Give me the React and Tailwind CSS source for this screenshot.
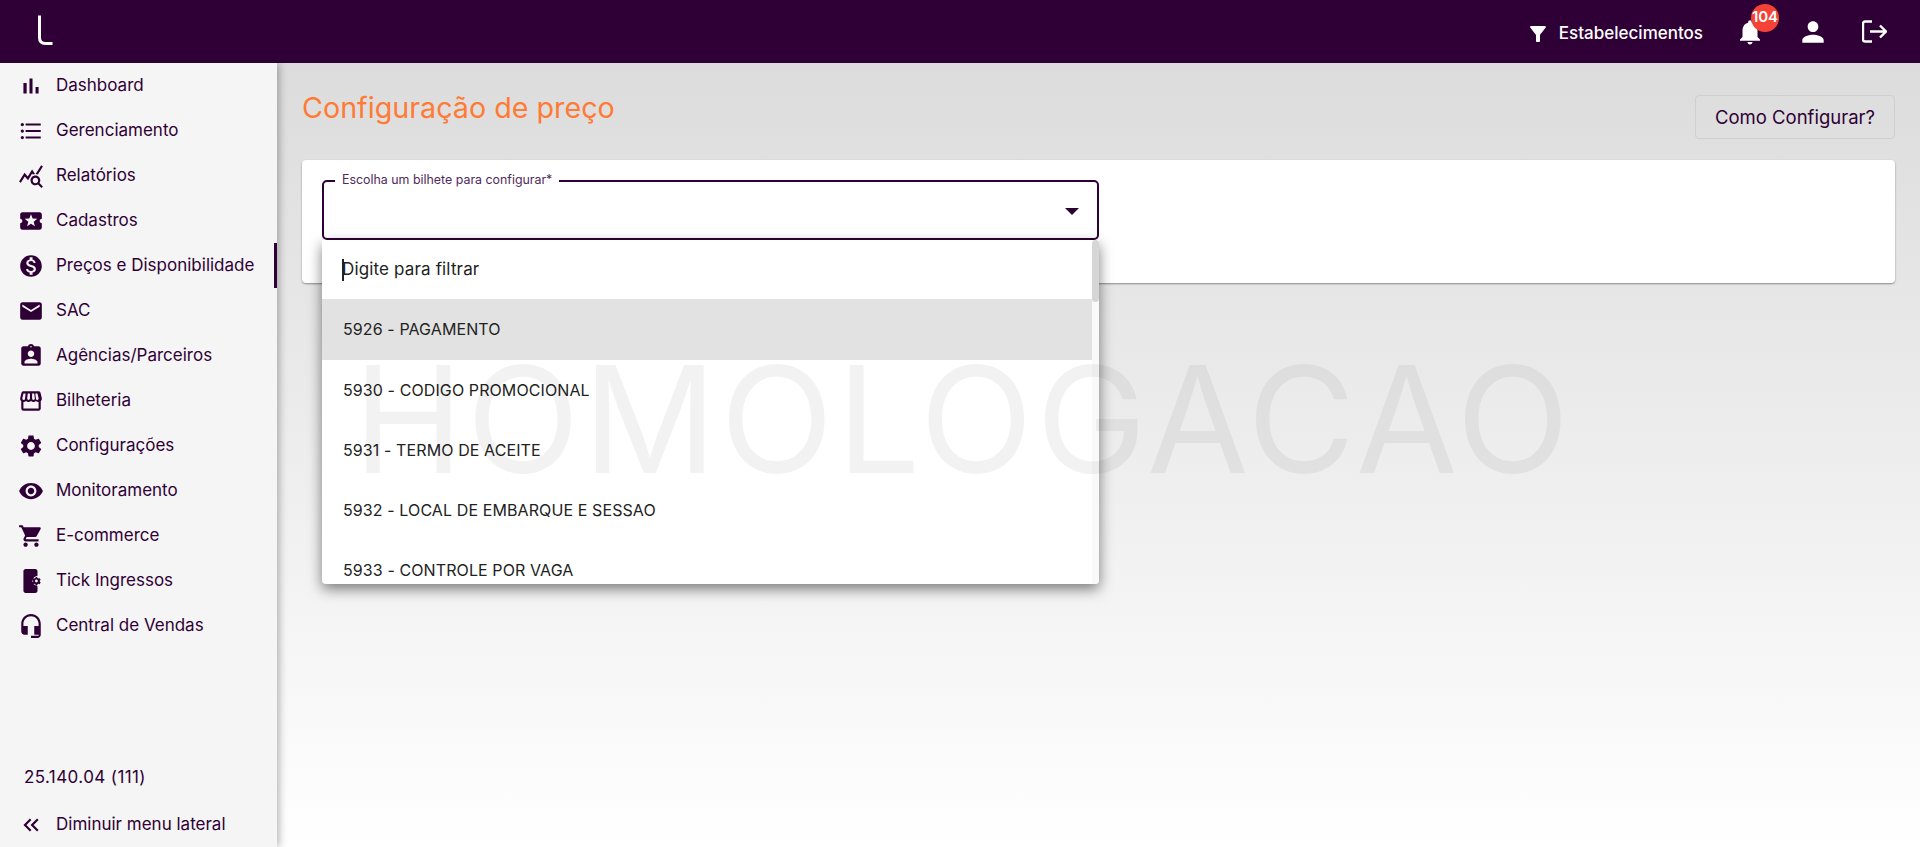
const FONT = "font-['Inter','Noto_Sans',sans-serif]";

const paths = {
  bar: "M5 9.2h3V19H5V9.2zM10.6 5h2.8v14h-2.8V5zm5.6 8H19v6h-2.8v-6z",
  list: "M4 10.5c-.83 0-1.5.67-1.5 1.5s.67 1.5 1.5 1.5 1.5-.67 1.5-1.5-.67-1.5-1.5-1.5zm0-6c-.83 0-1.5.67-1.5 1.5S3.17 7.5 4 7.5 5.5 6.83 5.5 6 4.83 4.5 4 4.5zm0 12c-.83 0-1.5.68-1.5 1.5s.68 1.5 1.5 1.5 1.5-.68 1.5-1.5-.67-1.5-1.5-1.5zM7 19h14v-2H7v2zm0-6h14v-2H7v2zm0-8v2h14V5H7z",
  query: "M19.88 18.47c.44-.7.7-1.51.7-2.39 0-2.49-2.01-4.5-4.5-4.5s-4.5 2.01-4.5 4.5 2.01 4.5 4.49 4.5c.88 0 1.7-.26 2.39-.7L21.58 23 23 21.58l-3.12-3.11zm-3.8.11c-1.38 0-2.5-1.12-2.5-2.5s1.12-2.5 2.5-2.5 2.5 1.12 2.5 2.5-1.12 2.5-2.5 2.5zm-.36-8.5c-.74.02-1.45.18-2.1.45l-.55-.83-3.8 6.18-3.01-3.52-3.63 5.81L1 17l5-8 3 3.5L13 6l2.72 4.08zm2.59.5c-.64-.28-1.33-.45-2.05-.49L21.38 2 23 3.18l-4.69 7.4z",
  ticket: "M20 12c0-1.1.9-2 2-2V6c0-1.1-.9-2-2-2H4c-1.1 0-1.99.9-1.99 2v4c1.1 0 1.99.9 1.99 2s-.89 2-2 2v4c0 1.1.9 2 2 2h16c1.1 0 2-.9 2-2v-4c-1.1 0-2-.9-2-2zm-4.42 4.8L12 14.5l-3.58 2.3 1.08-4.12-3.29-2.69 4.24-.25L12 5.8l1.54 3.95 4.24.25-3.29 2.69 1.09 4.11z",
  dollar: "M12 2C6.48 2 2 6.48 2 12s4.48 10 10 10 10-4.48 10-10S17.52 2 12 2zm1.41 16.09V20h-2.67v-1.93c-1.71-.36-3.16-1.46-3.27-3.4h1.96c.1 1.05.82 1.87 2.65 1.87 1.96 0 2.4-.98 2.4-1.59 0-.83-.44-1.61-2.67-2.14-2.48-.6-4.18-1.62-4.18-3.67 0-1.72 1.39-2.84 3.11-3.21V4h2.67v1.95c1.86.45 2.79 1.86 2.85 3.39H14.3c-.05-1.11-.64-1.87-2.22-1.87-1.5 0-2.4.68-2.4 1.64 0 .84.65 1.39 2.67 1.91s4.18 1.39 4.18 3.91c-.01 1.83-1.38 2.83-3.12 3.16z",
  mail: "M20 4H4c-1.1 0-1.99.9-1.99 2L2 18c0 1.1.9 2 2 2h16c1.1 0 2-.9 2-2V6c0-1.1-.9-2-2-2zm0 4l-8 5-8-5V6l8 5 8-5v2z",
  badge: "M19 3h-4.18C14.4 1.84 13.3 1 12 1s-2.4.84-2.82 2H5c-1.1 0-2 .9-2 2v14c0 1.1.9 2 2 2h14c1.1 0 2-.9 2-2V5c0-1.1-.9-2-2-2zm-7-.25c.41 0 .75.34.75.75s-.34.75-.75.75-.75-.34-.75-.75.34-.75.75-.75zM12 7c1.66 0 3 1.34 3 3s-1.34 3-3 3-3-1.34-3-3 1.34-3 3-3zm6 12H6v-1.4c0-2 4-3.1 6-3.1s6 1.1 6 3.1V19z",
  store: "M21.9 8.89l-1.05-4.37c-.22-.9-1-1.52-1.91-1.52H5.05c-.9 0-1.69.63-1.9 1.52L2.1 8.89c-.24 1.02-.02 2.06.62 2.88.08.11.19.19.28.29V19c0 1.1.9 2 2 2h14c1.1 0 2-.9 2-2v-6.94c.09-.09.2-.18.28-.28.64-.82.87-1.87.62-2.89zM7.02 5l-.58 4.86c-.08.65-.6 1.14-1.21 1.14-.49 0-.8-.29-.93-.47-.27-.34-.36-.78-.26-1.2L5.05 5h1.97zm10.92 0l1.05 4.33c.1.43.01.86-.26 1.2-.14.18-.44.47-.94.47-.61 0-1.14-.49-1.21-1.14L15.98 5h1.96zM15.51 9.52c.05.39-.07.78-.33 1.07-.22.26-.54.41-.95.41-.67 0-1.22-.59-1.22-1.31V5h1.96l.54 4.52zM11 9.69c0 .72-.55 1.31-1.29 1.31-.34 0-.65-.15-.89-.41-.25-.29-.37-.68-.33-1.07L9.04 5H11v4.69zM5 19v-6.03c.08.01.15.03.23.03.87 0 1.66-.36 2.24-.95.6.6 1.4.95 2.31.95.87 0 1.65-.36 2.23-.93.59.57 1.39.93 2.29.93.84 0 1.64-.35 2.24-.95.58.59 1.37.95 2.24.95.08 0 .15-.02.23-.03V19H5z",
  gear: "M19.14 12.94c.04-.3.06-.61.06-.94 0-.32-.02-.64-.07-.94l2.03-1.58c.18-.14.23-.41.12-.61l-1.92-3.32c-.12-.22-.37-.29-.59-.22l-2.39.96c-.5-.38-1.03-.7-1.62-.94l-.36-2.54c-.04-.24-.24-.41-.48-.41h-3.84c-.24 0-.43.17-.47.41l-.36 2.54c-.59.24-1.13.57-1.62.94l-2.39-.96c-.22-.08-.47 0-.59.22L2.74 8.87c-.12.21-.08.47.12.61l2.03 1.58c-.05.3-.09.63-.09.94s.02.64.07.94l-2.03 1.58c-.18.14-.23.41-.12.61l1.92 3.32c.12.22.37.29.59.22l2.39-.96c.5.38 1.03.7 1.62.94l.36 2.54c.05.24.24.41.48.41h3.84c.24 0 .44-.17.47-.41l.36-2.54c.59-.24 1.13-.56 1.62-.94l2.39.96c.22.08.47 0 .59-.22l1.92-3.32c.12-.22.07-.47-.12-.61l-2.01-1.58zM12 15.6c-1.98 0-3.6-1.62-3.6-3.6s1.62-3.6 3.6-3.6 3.6 1.62 3.6 3.6-1.62 3.6-3.6 3.6z",
  eye: "M12 4.5C7 4.5 2.73 7.61 1 12c1.73 4.39 6 7.5 11 7.5s9.27-3.11 11-7.5c-1.73-4.39-6-7.5-11-7.5zM12 17c-2.76 0-5-2.24-5-5s2.24-5 5-5 5 2.24 5 5-2.24 5-5 5zm0-8c-1.66 0-3 1.34-3 3s1.34 3 3 3 3-1.34 3-3-1.34-3-3-3z",
  cart: "M7 18c-1.1 0-1.99.9-1.99 2S5.9 22 7 22s2-.9 2-2-.9-2-2-2zM1 2v2h2l3.6 7.59-1.35 2.45c-.16.28-.25.61-.25.96 0 1.1.9 2 2 2h12v-2H7.42c-.14 0-.25-.11-.25-.25l.03-.12.9-1.63h7.45c.75 0 1.41-.41 1.75-1.03l3.58-6.49c.08-.14.12-.31.12-.48 0-.55-.45-1-1-1H5.21l-.94-2H1zm16 16c-1.1 0-1.99.9-1.99 2s.89 2 1.99 2 2-.9 2-2-.9-2-2-2z",
  phone: "M7 1h9c1.1 0 2 .9 2 2v4.2c-2.6.4-4.6 2.5-4.8 4.8.2 2.3 2.2 4.4 4.8 4.8V21c0 1.1-.9 2-2 2H7c-1.1 0-2-.9-2-2V3c0-1.1.9-2 2-2zm10.6 7.2l.5 1.1c.3.1.5.2.7.4l1.2-.3.9 1.5-.8.9c0 .2 0 .5 0 .7l.8.9-.9 1.5-1.2-.3c-.2.2-.4.3-.7.4l-.5 1.1h-1.2l-.4-1.1c-.3-.1-.5-.2-.7-.4l-1.2.3-.9-1.5.8-.9c0-.2 0-.5 0-.7l-.8-.9.9-1.5 1.2.3c.2-.2.4-.3.7-.4l.4-1.1h1.2zm-.6 2.5c-.7 0-1.3.6-1.3 1.3s.6 1.3 1.3 1.3 1.3-.6 1.3-1.3-.6-1.3-1.3-1.3z",
  headset: "M12 1c-4.97 0-9 4.03-9 9v7c0 1.66 1.34 3 3 3h3v-8H5v-2c0-3.87 3.13-7 7-7s7 3.13 7 7v2h-4v8h4v1h-7v2h6c1.66 0 3-1.34 3-3V10c0-4.97-4.03-9-9-9z",
  collapse: "M17.59 18 19 16.59 14.42 12 19 7.41 17.59 6l-6 6zM11 18l1.41-1.41L7.83 12l4.58-4.59L11 6l-6 6z",
};

const menu = [
  ["bar", "Dashboard"],
  ["list", "Gerenciamento"],
  ["query", "Relatórios"],
  ["ticket", "Cadastros"],
  ["dollar", "Preços e Disponibilidade"],
  ["mail", "SAC"],
  ["badge", "Agências/Parceiros"],
  ["store", "Bilheteria"],
  ["gear", "Configurações"],
  ["eye", "Monitoramento"],
  ["cart", "E-commerce"],
  ["phone", "Tick Ingressos"],
  ["headset", "Central de Vendas"],
];

const options = [
  "5930 - CODIGO PROMOCIONAL",
  "5931 - TERMO DE ACEITE",
  "5932 - LOCAL DE EMBARQUE E SESSAO",
  "5933 - CONTROLE POR VAGA",
];

function MenuIcon({ name }) {
  return (
    <svg viewBox="0 0 24 24" className="w-[26px] h-[26px] fill-[#2f0035] shrink-0">
      <path d={paths[name]} />
    </svg>
  );
}

function Sidebar() {
  return (
    <aside className="w-[277px] shrink-0 bg-[#f5f5f5] shadow-[2px_0_8px_rgba(0,0,0,0.3)] flex flex-col relative z-10 text-[#2f0035]">
      <nav className="flex flex-col">
        {menu.map(([icon, label], i) => (
          <div key={label} className={`h-[45px] flex items-center pl-[18px] gap-[12px] text-[17px] ${i === 4 ? "border-r-[3px] border-[#2f0035]" : ""}`}>
            <MenuIcon name={icon} />
            <span>{label}</span>
          </div>
        ))}
      </nav>
      <div className="mt-auto">
        <div className="pl-[24px] text-[17px] tracking-[0.4px] h-[24px] flex items-center mb-[12px]">25.140.04 (111)</div>
        <div className="h-[45px] flex items-center pl-[18px] gap-[12px] text-[17px]">
          <MenuIcon name="collapse" />
          <span>Diminuir menu lateral</span>
        </div>
      </div>
    </aside>
  );
}

function Header() {
  return (
    <header className="h-[63px] shrink-0 bg-[#2f0035] flex items-center justify-between text-white relative z-20 pr-[33px]">
      <svg viewBox="0 0 20 34" className="w-5 h-[34px] ml-[34px]" fill="none" stroke="white" strokeWidth="3">
        <path d="M5.5 0.5v22c0 4 2 6 6 6h7" />
      </svg>
      <div className="flex items-center">
        <div className="flex items-center mt-[5px] mr-[32px]">
          <svg viewBox="0 0 24 24" className="w-6 h-6 fill-white mr-[9px]">
            <path d="M4.25 5.61C6.27 8.2 10 13 10 13v6c0 .55.45 1 1 1h2c.55 0 1-.45 1-1v-6s3.72-4.8 5.74-7.39c.51-.66.04-1.61-.79-1.61H5.04c-.83 0-1.3.95-.79 1.61z" />
          </svg>
          <span className="text-[17px] font-medium">Estabelecimentos</span>
        </div>
        <div className="relative mr-[32px]">
          <svg viewBox="0 0 24 24" className="w-[30px] h-[30px] fill-white block">
            <path d="M12 22c1.1 0 2-.9 2-2h-4c0 1.1.9 2 2 2zm6-6v-5c0-3.07-1.63-5.64-4.5-6.32V4c0-.83-.67-1.5-1.5-1.5s-1.5.67-1.5 1.5v.68C7.64 5.36 6 7.92 6 11v5l-2 2v1h16v-1l-2-2z" />
          </svg>
          <span className="absolute -top-[13px] left-[16px] w-[28px] h-[28px] rounded-full bg-[#f44336] text-[15px] font-semibold flex items-center justify-center">104</span>
        </div>
        <svg viewBox="0 0 24 24" className="w-8 h-8 fill-white mr-[33px]">
          <path d="M12 12c2.21 0 4-1.79 4-4s-1.79-4-4-4-4 1.79-4 4 1.79 4 4 4zm0 2c-2.67 0-8 1.34-8 4v2h16v-2c0-2.66-5.33-4-8-4z" />
        </svg>
        <svg viewBox="0 0 25 23" className="w-[25px] h-[23px]" fill="none" stroke="white" strokeWidth="2.4">
          <path d="M10 1.5H3a2 2 0 0 0-2 2v16a2 2 0 0 0 2 2h7M8 11.5h16M18 5.5l6 6-6 6" />
        </svg>
      </div>
    </header>
  );
}

function TicketSelect() {
  return (
    <div className="relative w-[777px]">
      <div className="h-[60px] border-2 border-[#2f0035] rounded-[5px] flex items-center justify-end pr-[18px] pt-[2px]">
        <span className="w-0 h-0 border-x-[7px] border-x-transparent border-t-[7px] border-t-[#2f0035]" />
      </div>
      <span className="absolute -top-[8px] left-[13px] bg-white px-[7px] text-[12.4px] leading-[16px] text-[#4f2a5c]">Escolha um bilhete para configurar*</span>
      <div className="absolute top-[60px] left-0 w-full h-[344px] bg-white rounded-b-[4px] shadow-[0_5px_14px_rgba(0,0,0,0.5)] overflow-hidden z-20 flex">
        <div className="flex-1 min-w-0">
          <div className="h-[59px] flex items-center pl-[20px] text-[17px] tracking-[0.15px] text-[#222]">
            <span className="w-[2px] h-[22px] bg-[#222] -mr-[2px]" />
            Digite para filtrar
          </div>
          <div className="h-[61px] flex items-center pl-[21px] pb-[1px] text-base tracking-[0.1px] text-[#222] bg-[#e2e2e2]">5926 - PAGAMENTO</div>
          {options.map((o) => (
            <div key={o} className="h-[60px] flex items-center pl-[21px] text-base tracking-[0.1px] text-[#222]">{o}</div>
          ))}
        </div>
        <div className="w-[7px] bg-[#f9f9f9]">
          <div className="h-[62px] bg-[#d6d6d6] rounded-[4px]" />
        </div>
      </div>
    </div>
  );
}

export default function App() {
  return (
    <div className={`h-[847px] overflow-hidden flex flex-col ${FONT}`}>
      <Header />
      <div className="flex-1 flex min-h-0">
        <Sidebar />
        <main className="flex-1 relative bg-gradient-to-b from-[#dcdcdc] to-white pt-[32px] pl-[25px] pr-[25px]">
          <div className="flex justify-between items-start h-[65px]">
            <h1 className="text-[28.7px] leading-[30px] -mt-[2px] text-[#ff7b35]">Configuração de preço</h1>
            <button className="w-[200px] h-[44px] pt-[1px] border border-[#cfcfcf] rounded-[4px] text-[#2f0035] text-[18.5px]">Como Configurar?</button>
          </div>
          <div className="bg-white h-[123px] rounded-[4px] shadow-[0_1px_2px_rgba(0,0,0,0.4)] pt-[20px] pl-[20px]">
            <TicketSelect />
          </div>
          <div className="absolute top-[282px] left-[-14px] w-[1400px] text-center text-[148px] leading-[150px] font-normal tracking-[3.4px] text-black/5 pointer-events-none z-30">HOMOLOGACAO</div>
        </main>
      </div>
    </div>
  );
}
